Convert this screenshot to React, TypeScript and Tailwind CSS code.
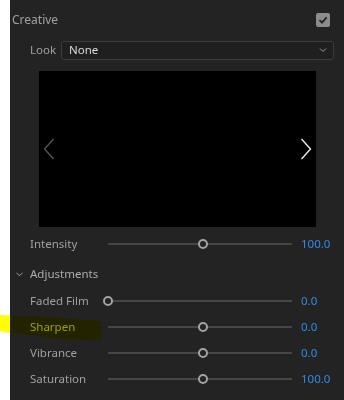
import React from "react";

const font = { fontFamily: '"Noto Sans", "Open Sans", sans-serif' };

function Slider({ label, pos, value }: { label: string; pos: number; value: string }) {
  return (
    <div className="flex h-[26px] items-center">
      <div className="w-[98px] pl-[20px] text-[11.5px] text-[#a0a0a0]">{label}</div>
      <div className="relative h-[10px] w-[184px]">
        <div className="absolute left-0 right-0 top-[4px] h-[2px] bg-[#464646]" />
        <div
          className="absolute top-0 h-[10px] w-[10px] rounded-full border-2 border-[#a3a3a3] bg-[#232323]"
          style={{ left: pos - 5 }}
        />
      </div>
      <div className="pl-[9px] text-[11.5px] text-[#2d8ceb]">{value}</div>
    </div>
  );
}

export default function App() {
  return (
    <div className="relative flex h-[400px] w-[344px] bg-white" style={font}>
      <div className="w-[10px]" />
      <div className="flex flex-1 flex-col bg-[#232323]">
        <div className="flex h-[40px] items-center justify-between pl-[2px] pr-[14px]">
          <span className="text-[12px] text-[#a0a0a0]">Creative</span>
          <div className="flex h-[14px] w-[14px] items-center justify-center rounded-[2px] bg-[#8c8c8c]">
            <svg width="10" height="10" viewBox="0 0 10 10">
              <path d="M1.5 5.2 L4 7.6 L8.6 2.4" fill="none" stroke="#232323" strokeWidth="1.8" />
            </svg>
          </div>
        </div>
        <div className="flex h-[20px] items-center">
          <span className="w-[51px] pl-[20px] text-[11.5px] text-[#a0a0a0]">Look</span>
          <div className="flex h-[19px] w-[273px] items-center justify-between rounded-[3px] border border-[#3c3c3c] bg-[#1f1f1f] pl-[7px] pr-[6px]">
            <span className="text-[11.5px] text-[#dcdcdc]">None</span>
            <svg width="8" height="6" viewBox="0 0 8 6">
              <path d="M1 1.5 L4 4.5 L7 1.5" fill="none" stroke="#9a9a9a" strokeWidth="1" />
            </svg>
          </div>
        </div>
        <div className="ml-[29px] mt-[11px] flex h-[156px] w-[277px] items-center justify-between bg-black px-[4px]">
          <svg width="12" height="22" viewBox="0 0 12 22">
            <path d="M10.5 1 L1.5 11 L10.5 21" fill="none" stroke="#5a5a5a" strokeWidth="1.2" />
          </svg>
          <svg width="12" height="22" viewBox="0 0 12 22">
            <path d="M1.5 1 L10.5 11 L1.5 21" fill="none" stroke="#ededed" strokeWidth="1.4" />
          </svg>
        </div>
        <div className="mt-[4px]">
          <Slider label="Intensity" pos={95} value="100.0" />
        </div>
        <div className="mt-[4px] flex h-[26px] items-center">
          <svg className="ml-[6px] mr-[7px]" width="7" height="5" viewBox="0 0 7 5">
            <path d="M0.5 0.8 L3.5 3.8 L6.5 0.8" fill="none" stroke="#a6a6a6" strokeWidth="1" />
          </svg>
          <span className="text-[11.5px] text-[#acacac]">Adjustments</span>
        </div>
        <div className="mt-[1px]">
          <Slider label="Faded Film" pos={0} value="0.0" />
          <Slider label="Sharpen" pos={95} value="0.0" />
          <Slider label="Vibrance" pos={95} value="0.0" />
          <Slider label="Saturation" pos={95} value="100.0" />
        </div>
      </div>
      <svg className="pointer-events-none absolute left-0 top-0 mix-blend-multiply" width="344" height="400">
        <polygon points="0,315 50,317 101,321 102,340 60,339 10,333 0,331" fill="#ffff00" />
      </svg>
    </div>
  );
}
